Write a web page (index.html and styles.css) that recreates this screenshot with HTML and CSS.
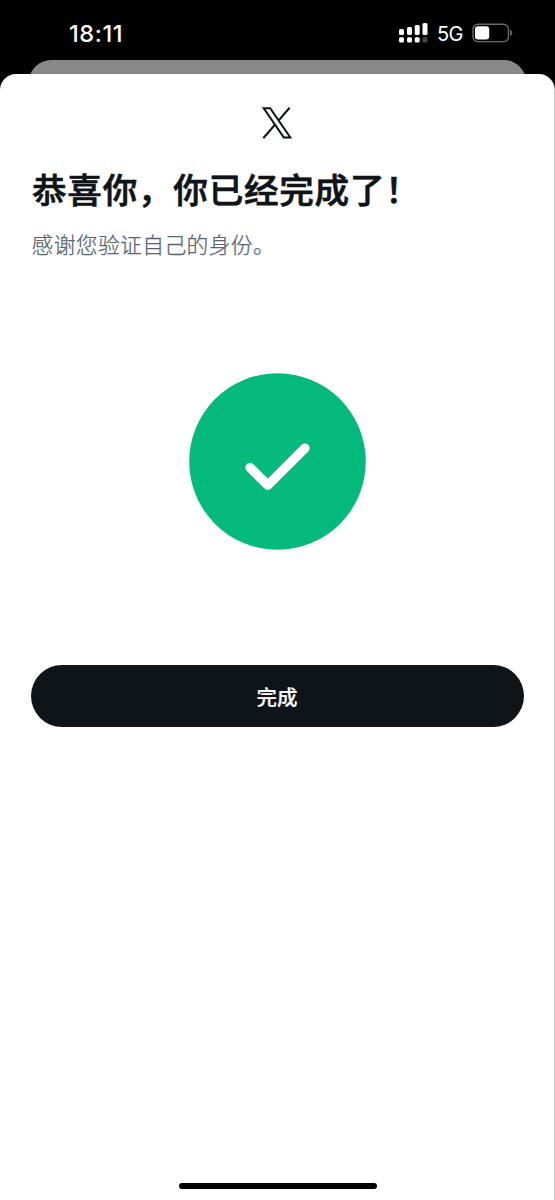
FILE: index.html
```html
<!DOCTYPE html>
<html lang="zh-CN">
<head>
<meta charset="utf-8">
<title>完成</title>
<link rel="stylesheet" href="styles.css">
</head>
<body>
<div class="phone">
  <header class="status">
    <span class="time">18:11</span>
    <div class="indicators">
      <svg class="signal" width="29" height="20" viewBox="0 0 29 20" fill="#fff">
        <rect x="0" y="6" width="5" height="6" rx="1.5"/>
        <rect x="8" y="4" width="5" height="8" rx="1.5"/>
        <rect x="15.7" y="2" width="5" height="10" rx="1.5"/>
        <rect x="23.5" y="0" width="5" height="12" rx="1.5"/>
        <rect x="0" y="14.2" width="5" height="5.3" rx="1.5"/>
        <rect x="8" y="14.2" width="5" height="5.3" rx="1.5"/>
        <rect x="15.7" y="14.2" width="5" height="5.3" rx="1.5"/>
        <rect x="23.5" y="14.2" width="5" height="5.3" rx="1.5" fill="#444"/>
      </svg>
      <span class="network">5G</span>
      <svg class="battery" width="41" height="20" viewBox="0 0 41 20">
        <rect x="1" y="1.2" width="35.5" height="17.4" rx="5" fill="none" stroke="#6b6b6b" stroke-width="1.4"/>
        <rect x="3" y="3.3" width="14.2" height="13.2" rx="3" fill="#fff"/>
        <path d="M38.3 6.8c2.6 1 2.6 5.200 0 6.200z" fill="#6b6b6b"/>
      </svg>
    </div>
  </header>
  <div class="sheet-behind"></div>
  <main class="sheet">
    <svg class="logo" width="31" height="32" viewBox="0 0 31 32" fill="none" stroke="#0f1419">
      <path d="M1.700 1.200H8.200L28.300 30.400H21.800Z" stroke-width="2"/>
      <path d="M27.600 0.700L16.500 13.600M12.800 17.900L1.300 31.200" stroke-width="2.100"/>
    </svg>
    <h1 class="title">恭喜你，你已经完成了！</h1>
    <p class="subtitle">感谢您验证自己的身份。</p>
    <svg class="success" width="177" height="177" viewBox="0 0 177 177">
      <circle cx="88.500" cy="88.500" r="88.300" fill="#04b97c"/>
      <path d="M61 94.500L78.800 112.300L116 75.100" fill="none" stroke="#fff" stroke-width="9.400" stroke-linecap="round" stroke-linejoin="round"/>
    </svg>
    <button class="done">完成</button>
    <div class="home-indicator"></div>
  </main>
</div>
</body>
</html>
```
FILE: styles.css
```css
* { box-sizing: border-box; }
body {
  margin: 0;
  background: #000;
  font-family: Inter, "Noto Sans CJK SC", sans-serif;
}
.phone {
  width: 555px;
  height: 1200px;
  display: flex;
  flex-direction: column;
  overflow: hidden;
}
.status {
  flex: none;
  height: 60px;
  display: flex;
  justify-content: space-between;
  padding: 0 42px 0 69px;
  color: #fff;
}
.time {
  padding-top: 20px;
  font-size: 23.5px;
  line-height: 28px;
  font-weight: 500;
  letter-spacing: 0.6px;
}
.indicators {
  display: flex;
  align-items: flex-start;
  padding-top: 23px;
}
.network {
  margin-left: 9px;
  width: 35px;
  margin-top: -3px;
  font-size: 20px;
  line-height: 28px;
  letter-spacing: -0.7px;
}
.sheet-behind {
  flex: none;
  height: 34px;
  margin: 0 29px;
  border-radius: 22px 22px 0 0;
  background: #888;
}
.sheet {
  flex: 1;
  margin-top: -20px;
  display: flex;
  flex-direction: column;
  align-items: center;
  padding: 33px 30px 11px 31px;
  border-right: 1px solid #c4c4c4;
  border-radius: 16px 16px 0 0;
  background: #fff;
}
.logo { flex: none; }
.title {
  align-self: stretch;
  margin: 26px 0 0;
  padding-left: 1px;
  font-size: 34.6px;
  line-height: 50px;
  font-weight: 500;
  letter-spacing: 0.75px;
  -webkit-text-stroke: 0.7px #0f1419;
  color: #0f1419;
  white-space: nowrap;
}
.subtitle {
  align-self: stretch;
  margin: 14px 0 0;
  padding-left: 0.5px;
  font-size: 21.8px;
  line-height: 32px;
  font-weight: 300;
  letter-spacing: 0.35px;
  -webkit-text-stroke: 0.25px #56646f;
  color: #56646f;
}
.success {
  flex: none;
  margin-top: 112px;
}
.done {
  flex: none;
  align-self: stretch;
  height: 62px;
  margin: 115px 0 0;
  padding: 0 1px 0 0;
  border: 0;
  border-radius: 31px;
  background: #0f1419;
  color: #fff;
  font-family: inherit;
  font-size: 20.5px;
  font-weight: 500;
  -webkit-text-stroke: 0.2px #fff;
}
.home-indicator {
  width: 198px;
  height: 6px;
  margin-top: auto;
  border-radius: 3px;
  background: #000;
}
```
